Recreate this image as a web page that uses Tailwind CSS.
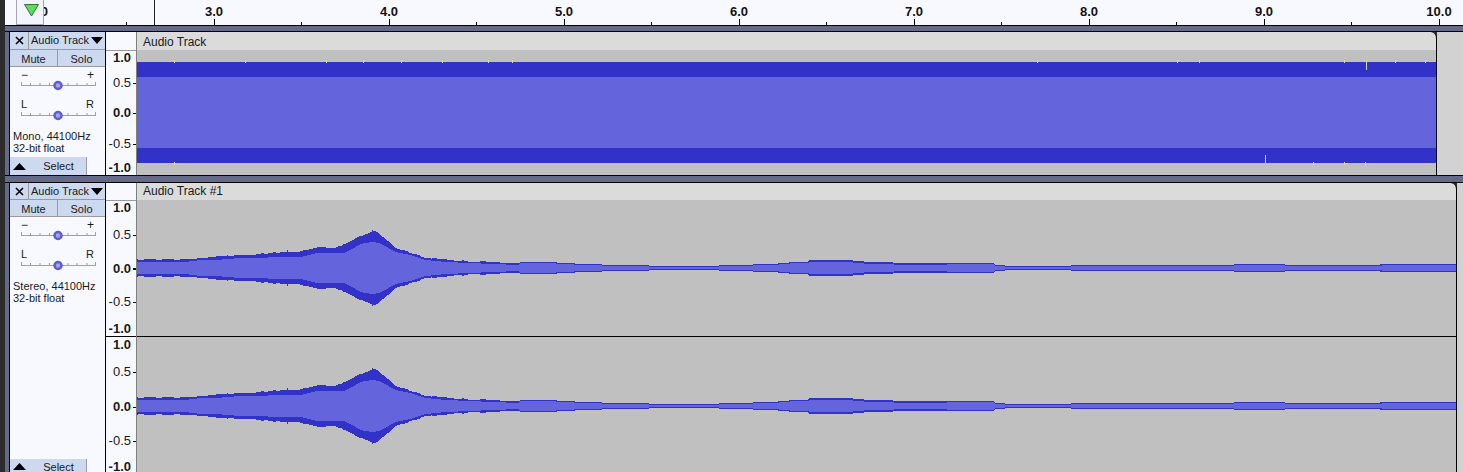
<!DOCTYPE html>
<html lang="en">

<head>
  <meta charset="UTF-8" />
  <title>Audio Tracks</title>
  <script src="https://cdn.jsdelivr.net/npm/@tailwindcss/browser@4"></script>
  <script>
    // x, outer half height, inner half height (read off the first channel)
    const envelope = [
      [137, 8, 6], [185, 8, 6], [200, 10, 8], [215, 11, 8], [240, 13, 10], [250, 13, 10], [285, 16, 11], [300, 17, 11],
      [317, 21, 15], [333, 20, 15], [343, 23, 15], [350, 26, 18], [360, 32, 24], [372, 37, 26], [378, 35, 25], [388, 27, 20],
      [395, 20, 16], [410, 15, 13], [425, 10, 8], [445, 8, 6], [470, 6.5, 5], [490, 6, 4], [505, 5, 3.5], [518, 4.5, 3],
      [520, 6, 4.5], [555, 6, 4.5], [557, 5, 3.5], [573, 5, 3.5], [575, 4, 3], [600, 4, 3], [602, 3, 2], [647, 3, 2],
      [649, 2, 1], [718, 2, 1], [720, 3, 2], [752, 3, 2], [754, 4, 3], [777, 4, 3], [779, 5, 3.5], [788, 5, 3.5],
      [790, 6, 4.5], [807, 6, 4.5], [809, 8, 6], [852, 8, 6], [854, 6.5, 4.5], [863, 6.5, 4.5], [865, 5.5, 4], [892, 5.5, 4],
      [894, 4.5, 3], [945, 4.5, 3], [947, 5, 3.5], [993, 5, 3.5], [995, 3, 2], [1003, 3, 2], [1005, 2, 1], [1070, 2, 1],
      [1072, 3, 2], [1233, 3, 2], [1235, 4, 3], [1283, 4, 3], [1285, 3, 2], [1380, 3, 2], [1382, 3.5, 2.5], [1456, 3.5, 2.5]
    ];

    function halfHeights(x) {
      let i = 0;
      while (i < envelope.length - 2 && envelope[i + 1][0] < x) i++;
      const [x0, o0, n0] = envelope[i];
      const [x1, o1, n1] = envelope[i + 1];
      const t = (x - x0) / (x1 - x0);
      return [o0 + (o1 - o0) * t, n0 + (n1 - n0) * t];
    }

    // small steps along the outline, so the loud part doesn't look drawn with a ruler
    function wobble(x) {
      const block = Math.floor(x / 6);
      const r = Math.abs(Math.sin(block * 12.9898) * 43758.5453) % 1;
      if (x < 500 || (x >= 1110 && x < 1130) || x >= 1380) return r > 0.66 ? 0.6 : r < 0.2 ? -0.5 : 0;
      return 0;
    }

    function wavePoints(which) {
      const top = [], bottom = [];
      for (let x = 137; x <= 1456; x++) {
        let h = halfHeights(x)[which];
        if (which === 0) h += wobble(x);
        if (which === 0 && x === 287) h = 18;
        h = Math.round(h);
        top.push(`${x - 137},${-h}`, `${x - 136},${-h}`);
        bottom.unshift(`${x - 136},${h}`, `${x - 137},${h}`);
      }
      return top.concat(bottom).join(" ");
    }

    document.addEventListener("DOMContentLoaded", () => {
      document.querySelectorAll(".wave-outer").forEach(el => el.setAttribute("points", wavePoints(0)));
      document.querySelectorAll(".wave-inner").forEach(el => el.setAttribute("points", wavePoints(1)));

      const ruler = document.getElementById("ruler");
      for (let n = 4; n <= 20; n++) {
        const x = 34 + (n - 4) * 87.5;
        if (n % 2 === 0) {
          ruler.insertAdjacentHTML("beforeend",
            `<span class="absolute top-[4px] w-[40px] -ml-[20px] text-center text-[13px] leading-[16px] font-bold text-[#111]" style="left:${x}px">${(n / 2).toFixed(1)}</span>
             <span class="absolute top-[19px] h-[6px] w-px bg-black" style="left:${x}px"></span>`);
        } else {
          ruler.insertAdjacentHTML("beforeend",
            `<span class="absolute top-[22px] h-[3px] w-px bg-black" style="left:${Math.floor(x)}px"></span>`);
        }
      }
    });
  </script>
</head>

<body class="bg-[#2b2b2b]">
  <div class="flex h-[472px] w-[1463px] overflow-hidden font-['Liberation_Sans',sans-serif] text-[12px] text-[#1a1a1a]">
    <div class="w-[5px] shrink-0 bg-[#2b2b2b]"></div>

    <div class="flex min-w-0 flex-1 flex-col">
      <!-- timeline -->
      <div id="ruler" class="relative h-[26px] shrink-0 overflow-hidden border-b border-black bg-[#f8f9ff]">
        <div class="absolute left-[11px] top-0 z-10 h-[25px] w-[28px] border-x border-b border-[#a8a8a8] bg-[#f2f5fd]">
          <svg width="26" height="24" viewBox="0 0 26 24">
            <polygon points="7.5,4.5 21.5,4.5 14.5,16" class="fill-[#55e055] stroke-[#3d6b45]" />
          </svg>
        </div>
        <div class="absolute left-[149px] top-0 h-[25px] w-px bg-[#222]"></div>
      </div>
      <div class="h-[5px] shrink-0 bg-[#646a88]"></div>

      <!-- mono track -->
      <div class="flex h-[145px] shrink-0 border-y border-black">
        <div class="w-[5px] shrink-0 border-r border-black bg-[#646a88]"></div>
        <div class="flex w-[96px] shrink-0 flex-col border-r border-black bg-[#f8f9ff]">
          <div class="flex h-[18px] shrink-0">
            <div class="flex w-[19px] shrink-0 items-center justify-center border-r border-b border-[#9a9a9a] bg-[#ccd9ef]">
              <svg width="9" height="9" viewBox="0 0 9 9"><path d="M1 1 8 8M8 1 1 8" class="fill-none stroke-black stroke-[1.6]" /></svg>
            </div>
            <div class="flex min-w-0 flex-1 items-center justify-between border-b border-[#9a9a9a] bg-[#ccd9ef] pl-[2px] pr-[2px] text-[11px] leading-none whitespace-nowrap">
              <span>Audio Track</span>
              <svg class="shrink-0" width="12" height="7" viewBox="0 0 12 7"><polygon points="0,0 12,0 6,7" class="fill-black" /></svg>
            </div>
          </div>
          <div class="flex h-[17px] shrink-0 text-center text-[11px] leading-[18px]">
            <div class="w-[48px] border-r border-b border-[#9a9a9a] bg-[#ccd9ef]">Mute</div>
            <div class="flex-1 border-b border-[#9a9a9a] bg-[#ccd9ef]">Solo</div>
          </div>
          <div class="mt-[2px] flex h-[12px] justify-between px-[11px] text-[12px] leading-[12px]"><span>−</span><span>+</span></div>
          <svg class="-mt-[1px] block shrink-0" width="95" height="11" viewBox="0 0 95 11">
            <path d="M11 5.5H86M11.5 2V5M20.5 3V5M30 3V5M39.5 3V5M58 3V5M67 3V5M77 3V5M85.5 2V5" class="fill-none stroke-[#a0a0a0]" />
            <circle cx="48" cy="5.5" r="3.5" class="fill-[#a8a8c0] stroke-[#5a5ae6] stroke-[2.5]" />
          </svg>
          <div class="mt-[7px] flex h-[12px] justify-between px-[11px] text-[11px] leading-[12px]"><span>L</span><span>R</span></div>
          <svg class="block shrink-0" width="95" height="11" viewBox="0 0 95 11">
            <path d="M11 5.5H86M11.5 2V5M20.5 3V5M30 3V5M39.5 3V5M58 3V5M67 3V5M77 3V5M85.5 2V5" class="fill-none stroke-[#a0a0a0]" />
            <circle cx="48" cy="5.5" r="3.5" class="fill-[#a8a8c0] stroke-[#5a5ae6] stroke-[2.5]" />
          </svg>
          <div class="mt-[9px] pl-[3px] text-[11px] leading-[12px]">Mono, 44100Hz<br />32-bit float</div>
          <div class="mt-auto flex h-[18px] shrink-0 text-center text-[11px] leading-[19px]">
            <div class="flex w-[19px] shrink-0 items-center justify-center bg-[#ccd9ef]">
              <svg width="13" height="7" viewBox="0 0 13 7"><polygon points="0,7 13,7 6.5,0" class="fill-black" /></svg>
            </div>
            <div class="w-[58px] border-r border-[#9a9a9a] bg-[#ccd9ef] pl-[2px]">Select</div>
          </div>
        </div>
        <div class="flex w-[31px] shrink-0 flex-col border-r border-[#808080] bg-[#f8f9ff] text-[13px] leading-[14px]">
          <div class="h-[19px] shrink-0 border-b border-[#9a9a9a]"></div>
          <div class="flex justify-end pr-[5px] font-bold">1.0</div>
          <div class="mt-[11px] flex items-center justify-end"><span class="pr-[2px]">0.5</span><i class="h-px w-[3px] bg-black"></i></div>
          <div class="mt-[16px] flex items-center justify-end"><span class="pr-[2px] font-bold">0.0</span><i class="h-px w-[3px] bg-black"></i></div>
          <div class="mt-[17px] flex items-center justify-end"><span class="pr-[2px]">-0.5</span><i class="h-px w-[3px] bg-black"></i></div>
          <div class="mt-[10px] flex justify-end pr-[5px] font-bold">-1.0</div>
        </div>
        <div class="flex w-[1300px] shrink-0 flex-col">
          <div class="h-[18px] shrink-0 overflow-hidden rounded-tr-[6px] border-r border-black bg-[#dbdbdb] pl-[6px] text-[12px] leading-[20px]">Audio Track</div>
          <div class="h-[125px] shrink-0 border-r border-black">
            <svg class="block" width="1299" height="125" viewBox="0 0 1299 125" shape-rendering="crispEdges">
              <rect width="1299" height="125" class="fill-[#c0c0c0]" />
              <rect y="12" width="1299" height="101" class="fill-[#3232c8]" />
              <rect y="27" width="1299" height="71" class="fill-[#6464dc]" />
              <path d="M37.5 10V13M108.5 10V13M189.5 10V13M226.5 10V13M264.5 10V13M305.5 10V13M351.5 10V13M375.5 10V13M900.5 10V13M1040.5 10V13M1062.5 10V13M1207.5 10V13M1229.5 10V20M1258.5 10V13M1288.5 10V13M37.5 112V115M1128.5 105V113M1176.5 112V115M1207.5 112V115M1228.5 112V115" class="fill-none stroke-[#d8d8a8]" />
            </svg>
          </div>
        </div>
        <div class="flex-1 bg-[#d2d2d2]"></div>
      </div>

      <div class="h-[6px] shrink-0 bg-[#646a88]"></div>

      <!-- stereo track -->
      <div class="flex flex-1 border-t border-black">
        <div class="w-[5px] shrink-0 border-r border-black bg-[#646a88]"></div>
        <div class="flex w-[96px] shrink-0 flex-col border-r border-black bg-[#f8f9ff]">
          <div class="flex h-[17px] shrink-0">
            <div class="flex w-[19px] shrink-0 items-center justify-center border-r border-b border-[#9a9a9a] bg-[#ccd9ef]">
              <svg width="9" height="9" viewBox="0 0 9 9"><path d="M1 1 8 8M8 1 1 8" class="fill-none stroke-black stroke-[1.6]" /></svg>
            </div>
            <div class="flex min-w-0 flex-1 items-center justify-between border-b border-[#9a9a9a] bg-[#ccd9ef] pl-[2px] pr-[2px] text-[11px] leading-none whitespace-nowrap">
              <span>Audio Track</span>
              <svg class="shrink-0" width="12" height="7" viewBox="0 0 12 7"><polygon points="0,0 12,0 6,7" class="fill-black" /></svg>
            </div>
          </div>
          <div class="flex h-[17px] shrink-0 text-center text-[11px] leading-[18px]">
            <div class="w-[48px] border-r border-b border-[#9a9a9a] bg-[#ccd9ef]">Mute</div>
            <div class="flex-1 border-b border-[#9a9a9a] bg-[#ccd9ef]">Solo</div>
          </div>
          <div class="mt-[2px] flex h-[12px] justify-between px-[11px] text-[12px] leading-[12px]"><span>−</span><span>+</span></div>
          <svg class="-mt-[1px] block shrink-0" width="95" height="11" viewBox="0 0 95 11">
            <path d="M11 5.5H86M11.5 2V5M20.5 3V5M30 3V5M39.5 3V5M58 3V5M67 3V5M77 3V5M85.5 2V5" class="fill-none stroke-[#a0a0a0]" />
            <circle cx="48" cy="5.5" r="3.5" class="fill-[#a8a8c0] stroke-[#5a5ae6] stroke-[2.5]" />
          </svg>
          <div class="mt-[7px] flex h-[12px] justify-between px-[11px] text-[11px] leading-[12px]"><span>L</span><span>R</span></div>
          <svg class="block shrink-0" width="95" height="11" viewBox="0 0 95 11">
            <path d="M11 5.5H86M11.5 2V5M20.5 3V5M30 3V5M39.5 3V5M58 3V5M67 3V5M77 3V5M85.5 2V5" class="fill-none stroke-[#a0a0a0]" />
            <circle cx="48" cy="5.5" r="3.5" class="fill-[#a8a8c0] stroke-[#5a5ae6] stroke-[2.5]" />
          </svg>
          <div class="mt-[9px] pl-[3px] text-[11px] leading-[12px]">Stereo, 44100Hz<br />32-bit float</div>
          <div class="mt-auto flex h-[15px] shrink-0 text-center text-[11px] leading-[17px]">
            <div class="flex w-[19px] shrink-0 items-center justify-center bg-[#ccd9ef]">
              <svg width="13" height="7" viewBox="0 0 13 7"><polygon points="0,7 13,7 6.5,0" class="fill-black" /></svg>
            </div>
            <div class="w-[58px] border-r border-[#9a9a9a] bg-[#ccd9ef] pl-[2px]">Select</div>
          </div>
        </div>
        <div class="flex w-[31px] shrink-0 flex-col border-r border-[#808080] bg-[#f8f9ff] text-[13px] leading-[14px]">
          <div class="h-[18px] shrink-0 border-b border-[#9a9a9a]"></div>
          <div class="flex justify-end pr-[5px] font-bold">1.0</div>
          <div class="mt-[13px] flex items-center justify-end"><span class="pr-[2px]">0.5</span><i class="h-px w-[3px] bg-black"></i></div>
          <div class="mt-[20px] flex items-center justify-end"><span class="pr-[2px] font-bold">0.0</span><i class="h-[2px] w-[3px] bg-black"></i></div>
          <div class="mt-[19px] flex items-center justify-end"><span class="pr-[2px]">-0.5</span><i class="h-px w-[3px] bg-black"></i></div>
          <div class="mt-[13px] flex justify-end pr-[5px] font-bold">-1.0</div>
          <div class="h-px shrink-0 bg-black"></div>
          <div class="mt-[1px] flex justify-end pr-[5px] font-bold">1.0</div>
          <div class="mt-[13px] flex items-center justify-end"><span class="pr-[2px]">0.5</span><i class="h-px w-[3px] bg-black"></i></div>
          <div class="mt-[21px] flex items-center justify-end"><span class="pr-[2px] font-bold">0.0</span><i class="h-px w-[3px] bg-black"></i></div>
          <div class="mt-[20px] flex items-center justify-end"><span class="pr-[2px]">-0.5</span><i class="h-px w-[3px] bg-black"></i></div>
          <div class="mt-[12px] flex justify-end pr-[5px] font-bold">-1.0</div>
        </div>
        <div class="flex w-[1320px] shrink-0 flex-col">
          <div class="h-[17px] shrink-0 overflow-hidden rounded-tr-[6px] border-r border-black bg-[#dbdbdb] pl-[6px] text-[12px] leading-[17px]">Audio Track #1</div>
          <div class="h-[136px] shrink-0 border-r border-black">
            <svg class="block" width="1319" height="136" viewBox="0 0 1319 136" shape-rendering="crispEdges">
              <rect width="1319" height="136" class="fill-[#c0c0c0]" />
              <g transform="translate(0,68)">
                <polygon class="wave-outer fill-[#3232c8]" />
                <polygon class="wave-inner fill-[#6464dc]" />
              </g>
            </svg>
          </div>
          <div class="h-px shrink-0 bg-black"></div>
          <div class="flex-1 border-r border-black">
            <svg class="block" width="1319" height="136" viewBox="0 0 1319 136" shape-rendering="crispEdges">
              <rect width="1319" height="136" class="fill-[#c0c0c0]" />
              <g transform="translate(0,69)">
                <polygon class="wave-outer fill-[#3232c8]" />
                <polygon class="wave-inner fill-[#6464dc]" />
              </g>
            </svg>
          </div>
        </div>
        <div class="flex-1 bg-[#d2d2d2]"></div>
      </div>
    </div>
  </div>
</body>

</html>
